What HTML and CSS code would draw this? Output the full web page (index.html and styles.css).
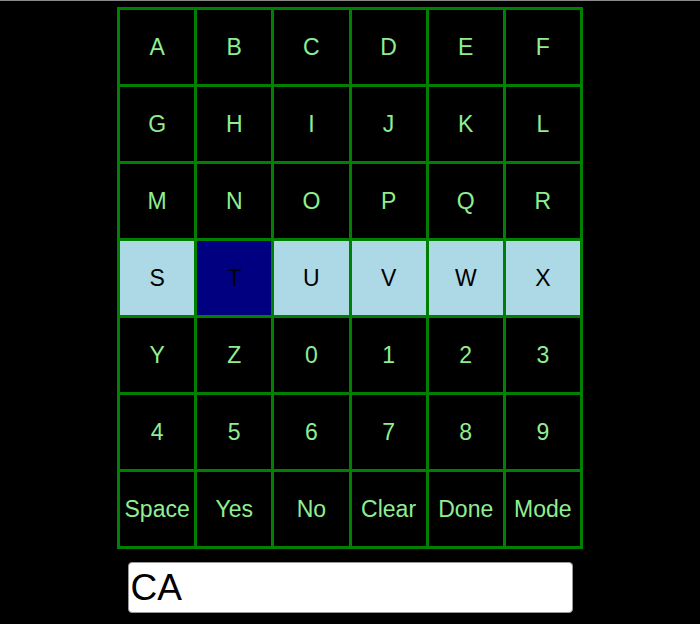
FILE: index.html
```html
<!DOCTYPE html>
<html>
<head>
<meta charset="utf-8">
<link rel="stylesheet" href="styles.css">
</head>
<body>
<div class="page">
  <div class="board">
    <div class="key">A</div><div class="key">B</div><div class="key">C</div><div class="key">D</div><div class="key">E</div><div class="key">F</div>
    <div class="key">G</div><div class="key">H</div><div class="key">I</div><div class="key">J</div><div class="key">K</div><div class="key">L</div>
    <div class="key">M</div><div class="key">N</div><div class="key">O</div><div class="key">P</div><div class="key">Q</div><div class="key">R</div>
    <div class="key row-on">S</div><div class="key cur">T</div><div class="key row-on">U</div><div class="key row-on">V</div><div class="key row-on">W</div><div class="key row-on">X</div>
    <div class="key">Y</div><div class="key">Z</div><div class="key">0</div><div class="key">1</div><div class="key">2</div><div class="key">3</div>
    <div class="key">4</div><div class="key">5</div><div class="key">6</div><div class="key">7</div><div class="key">8</div><div class="key">9</div>
    <div class="key">Space</div><div class="key">Yes</div><div class="key">No</div><div class="key">Clear</div><div class="key">Done</div><div class="key">Mode</div>
  </div>
  <div class="output">CA</div>
</div>
</body>
</html>
```
FILE: styles.css
```css
html, body {
  margin: 0;
  padding: 0;
  background: #000;
}
body {
  border-top: 1px solid #8a8a8a;
  min-height: 623px;
  font-family: "Liberation Sans", Arial, sans-serif;
}
.page {
  display: flex;
  flex-direction: column;
  align-items: center;
  padding-top: 6px;
}
.board {
  display: grid;
  grid-template-columns: repeat(6, 74.17px);
  grid-template-rows: repeat(7, 74px);
  gap: 3px;
  padding: 3px;
  background: #008000;
}
.key {
  background: #000;
  color: #90ee90;
  font-size: 23px;
  display: flex;
  align-items: center;
  justify-content: center;
}
.key.row-on {
  background: #add8e6;
  color: #000;
}
.key.cur {
  background: #000080;
  color: #000;
}
.output {
  margin-top: 13px;
  width: 441px;
  height: 49px;
  background: #fff;
  border: 1px solid #999;
  border-radius: 4px;
  color: #000;
  font-size: 37px;
  line-height: 49px;
  padding-left: 2px;
  box-sizing: content-box;
}
```
